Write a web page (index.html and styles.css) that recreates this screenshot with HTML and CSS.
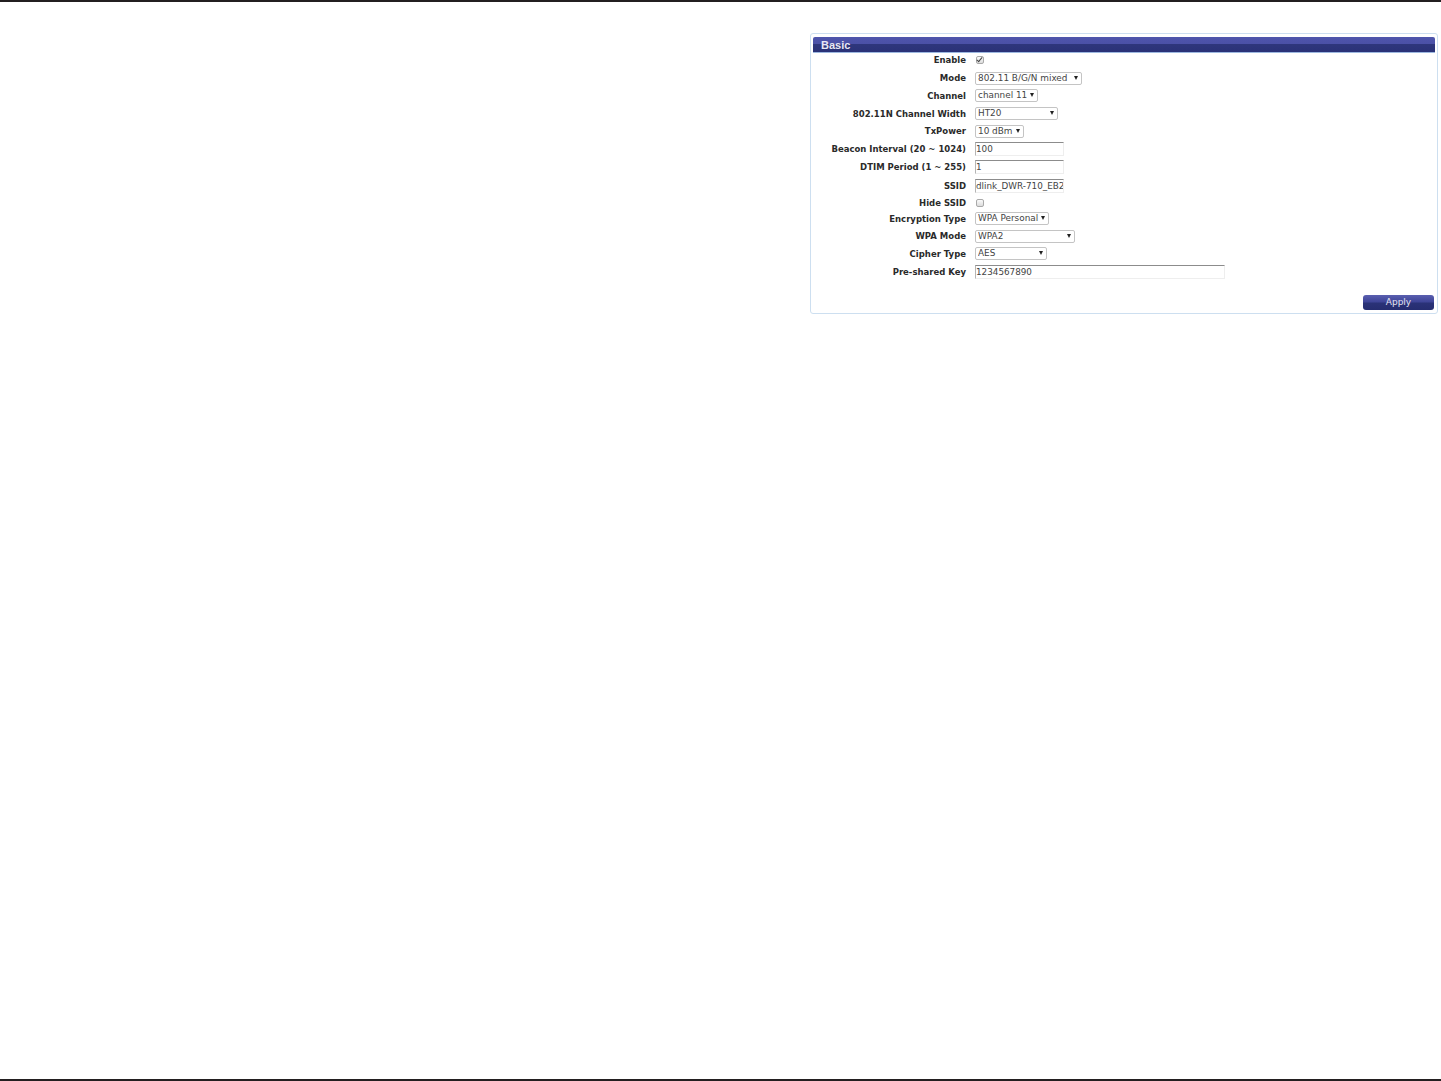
FILE: index.html
```html
<!DOCTYPE html>
<html lang="en">
<head>
    <meta charset="UTF-8">
    <meta name="viewport" content="width=device-width, initial-scale=1.0">
    <title>Basic</title>
    <link rel="stylesheet" href="styles.css">
</head>
<body>

    <div class="page">
        <div class="panel">
            <h2 class="panel-title">Basic</h2>

            <div class="row row-enable">
                <label>Enable</label>
                <input type="checkbox" checked>
            </div>
            <div class="row row-select">
                <label>Mode</label>
                <div class="select w-mode"><select><option>802.11 B/G/N mixed</option></select></div>
            </div>
            <div class="row row-select">
                <label>Channel</label>
                <div class="select w-channel"><select><option>channel 11</option></select></div>
            </div>
            <div class="row row-select">
                <label>802.11N Channel Width</label>
                <div class="select w-width"><select><option>HT20</option></select></div>
            </div>
            <div class="row row-select">
                <label>TxPower</label>
                <div class="select w-power"><select><option>10 dBm</option></select></div>
            </div>
            <div class="row row-beacon">
                <label>Beacon Interval (20 ~ 1024)</label>
                <input type="text" class="w-short" value="100">
            </div>
            <div class="row row-input">
                <label>DTIM Period (1 ~ 255)</label>
                <input type="text" class="w-short" value="1">
            </div>
            <div class="row row-input">
                <label>SSID</label>
                <input type="text" class="w-short" value="dlink_DWR-710_EB2C">
            </div>
            <div class="row row-hide">
                <label>Hide SSID</label>
                <input type="checkbox">
            </div>
            <div class="row row-select">
                <label>Encryption Type</label>
                <div class="select w-enc"><select><option>WPA Personal</option></select></div>
            </div>
            <div class="row row-select">
                <label>WPA Mode</label>
                <div class="select w-wpa"><select><option>WPA2</option></select></div>
            </div>
            <div class="row row-select">
                <label>Cipher Type</label>
                <div class="select w-cipher"><select><option>AES</option></select></div>
            </div>
            <div class="row row-input">
                <label>Pre-shared Key</label>
                <input type="text" class="w-long" value="1234567890">
            </div>

            <div class="actions">
                <button class="apply-button">Apply</button>
            </div>
        </div>
    </div>

</body>
</html>
```

FILE: styles.css
```css
html, body {
    margin: 0;
    height: 100%;
}

body {
    font-family: "DejaVu Sans", Verdana, sans-serif;
    font-size: 9px;
    background-color: white;
    color: #222;
}

.page {
    box-sizing: border-box;
    height: 1081px;
    border-top: 2px solid #231f20;
    border-bottom: 2px solid #231f20;
    padding: 31px 3px 0 810px;
}

.panel {
    box-sizing: border-box;
    height: 281px;
    padding: 3px 2px 0 2px;
    border: 1px solid #cddff0;
    border-radius: 3px;
}

.panel-title {
    height: 16px;
    margin: 0;
    padding-left: 8px;
    border-radius: 2px 2px 0 0;
    border-bottom: 1px solid #9db8e0;
    box-sizing: border-box;
    background: linear-gradient(#4f55ac 0, #4a50a6 50%, #2e367c 50%, #2a3277 100%);
    color: #e8e8f4;
    font-family: "Liberation Sans", Arial, sans-serif;
    font-size: 11px;
    font-weight: bold;
    line-height: 16px;
}

.row {
    display: flex;
    align-items: center;
    gap: 9px;
    box-sizing: border-box;
}

.row label {
    width: 153px;
    flex: none;
    text-align: right;
    font-size: 8.5px;
    font-weight: bold;
    color: #2a2a2a;
}

.row-enable {
    height: 16.6px;
    padding-bottom: 2px;
}

.row-select {
    height: 17.6px;
}

.row-beacon {
    height: 18px;
}

.row-input {
    height: 19px;
}

.row-hide {
    height: 14px;
}

.row input[type="checkbox"] {
    position: relative;
    appearance: none;
    box-sizing: border-box;
    width: 8px;
    height: 8px;
    margin: 0 0 0 1px;
    border: 1px solid #a9a9a9;
    border-radius: 2px;
    background: linear-gradient(#fbfbfb, #dcdcdc);
}

.row input[type="checkbox"]:checked::after {
    content: "";
    position: absolute;
    left: 1px;
    top: -1px;
    width: 2px;
    height: 5px;
    border-right: 1px solid #444;
    border-bottom: 1px solid #444;
    transform: rotate(40deg);
}

.row input[type="text"] {
    box-sizing: border-box;
    height: 14px;
    margin: 0;
    padding: 0;
    border: 1px solid #eeeeee;
    border-top-color: #8c8c8c;
    border-left-color: #b5b5b5;
    border-radius: 0;
    outline: none;
    font-family: inherit;
    font-size: 8.8px;
    color: #444;
}

.select {
    position: relative;
    box-sizing: border-box;
    height: 13px;
    border: 1px solid #c4c4c4;
    border-radius: 2px;
    background-color: white;
}

.select::after {
    content: "";
    position: absolute;
    right: 3px;
    top: 3px;
    border-left: 2px solid transparent;
    border-right: 2px solid transparent;
    border-top: 4px solid #222;
}

.select select {
    display: block;
    width: 100%;
    height: 11px;
    padding: 0 0 0 2px;
    border: 0;
    outline: none;
    appearance: none;
    background: transparent;
    font-family: inherit;
    font-size: 8.9px;
    line-height: 11px;
    color: #444;
}

.w-mode { width: 107px; }
.w-channel { width: 63px; }
.w-width { width: 83px; }
.w-power { width: 49px; }
.w-enc { width: 74px; }
.w-wpa { width: 100px; }
.w-cipher { width: 72px; }
.w-short { width: 89px; }
.w-long { width: 250px; }

.actions {
    display: flex;
    justify-content: flex-end;
    padding: 13.4px 1px 0 0;
}

.apply-button {
    width: 71px;
    height: 15px;
    padding: 0;
    border: 0;
    border-radius: 3px;
    background: linear-gradient(#5a5fb0 0, #3f4598 45%, #2a3277 55%, #262d70 100%);
    color: #e4e4f2;
    font-family: inherit;
    font-size: 9px;
    line-height: 15px;
    cursor: pointer;
}
```
